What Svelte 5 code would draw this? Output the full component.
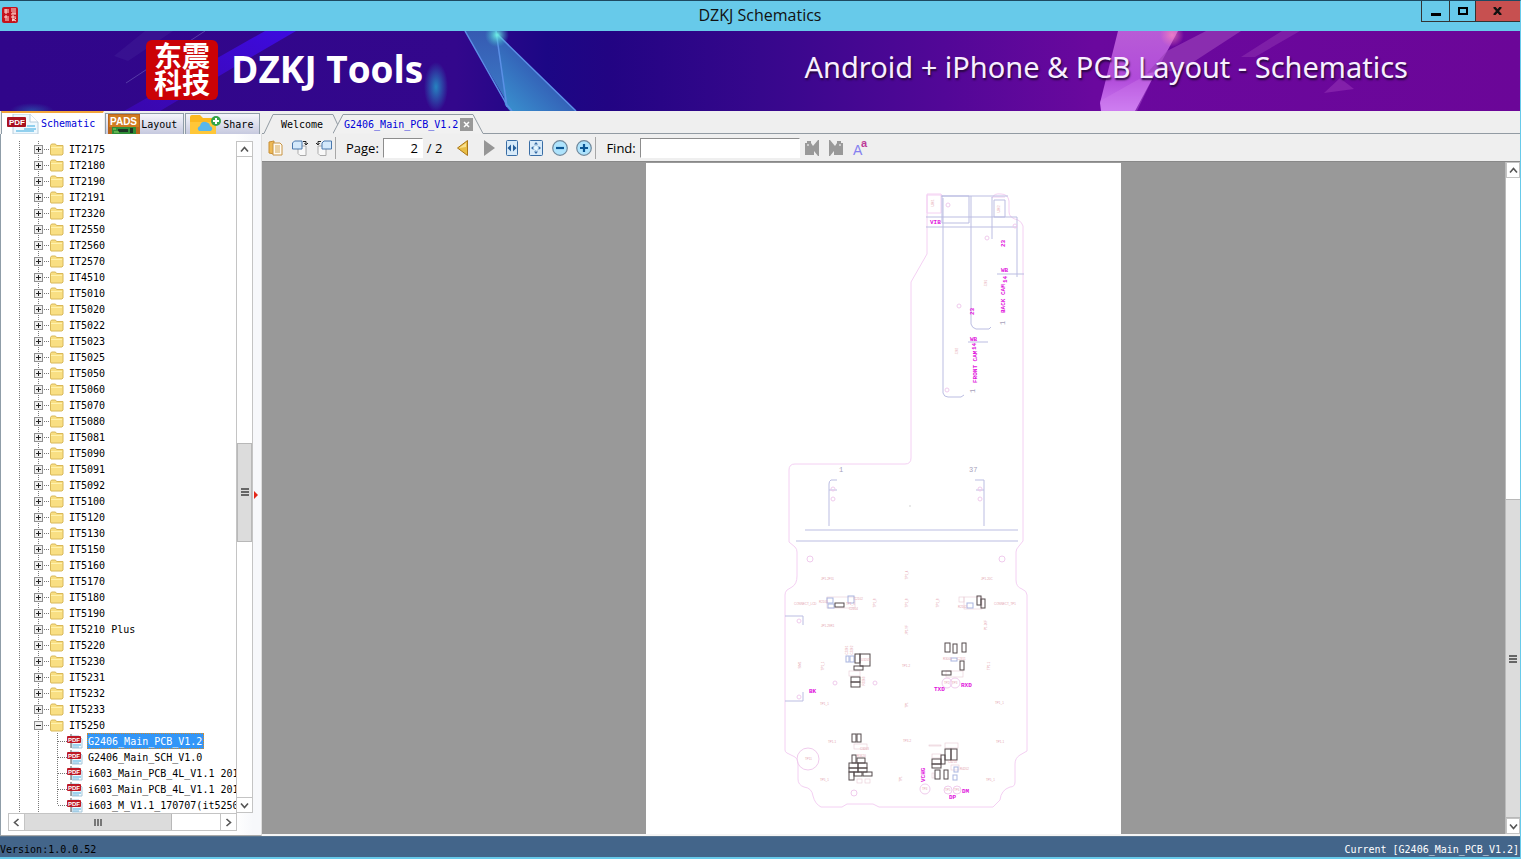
<script>
  const folders = [
    'IT2175', 'IT2180', 'IT2190', 'IT2191', 'IT2320', 'IT2550', 'IT2560', 'IT2570',
    'IT4510', 'IT5010', 'IT5020', 'IT5022', 'IT5023', 'IT5025', 'IT5050', 'IT5060',
    'IT5070', 'IT5080', 'IT5081', 'IT5090', 'IT5091', 'IT5092', 'IT5100', 'IT5120',
    'IT5130', 'IT5150', 'IT5160', 'IT5170', 'IT5180', 'IT5190', 'IT5210 Plus',
    'IT5220', 'IT5230', 'IT5231', 'IT5232', 'IT5233', 'IT5250'
  ]
  const files = [
    'G2406_Main_PCB_V1.2',
    'G2406_Main_SCH_V1.0',
    'i603_Main_PCB_4L_V1.1 20170707',
    'i603_Main_PCB_4L_V1.1 20170710',
    'i603_M_V1.1_170707(it5250)'
  ]

  let open = $state('IT5250')
  let selected = $state(files[0])
  let page = $state('2')
  let query = $state('')

  // component outlines on the board: x, y, width, height
  const parts = [
    [835, 603, 9, 4], [977, 596, 4, 9], [981, 599, 4, 9],
    [855, 654, 5, 9], [860, 654, 10, 12], [854, 666, 9, 4], [851, 677, 9, 5], [851, 682, 9, 5],
    [945, 643, 5, 9], [953, 644, 4, 9], [962, 643, 4, 9], [960, 661, 4, 9], [942, 671, 9, 4],
    [852, 734, 4, 8], [857, 734, 4, 8],
    [852, 755, 4, 8], [857, 758, 8, 5], [849, 763, 9, 5], [858, 763, 9, 5], [849, 768, 9, 4],
    [858, 768, 9, 4], [849, 772, 5, 8], [854, 772, 8, 4], [863, 772, 9, 4],
    [945, 749, 6, 11], [951, 749, 6, 11], [941, 755, 4, 9], [932, 759, 9, 5], [932, 764, 9, 4],
    [935, 770, 5, 9], [944, 770, 4, 9]
  ]
  const blueParts = [
    [827, 598, 6, 5], [828, 604, 6, 4], [848, 596, 6, 7], [967, 603, 6, 5],
    [846, 656, 3, 6], [850, 656, 4, 6], [951, 658, 6, 3], [954, 767, 4, 5], [953, 775, 4, 5]
  ]
  const faintParts = [
    [827, 597, 28, 11], [959, 597, 5, 5], [964, 597, 18, 12], [849, 671, 11, 5],
    [946, 671, 17, 6], [854, 744, 13, 5], [929, 745, 12, 1], [945, 743, 13, 5], [932, 754, 9, 4],
    [857, 779, 5, 4], [865, 779, 5, 4], [932, 773, 2, 5], [951, 765, 8, 5]
  ]
  const holes = [
    [810, 559, 3], [1002, 559, 3], [833, 489, 2], [833, 499, 2], [980, 489, 2], [980, 499, 2],
    [799, 621, 2], [799, 697, 2], [835, 683, 2], [875, 683, 2], [854, 793, 3], [948, 205, 2],
    [987, 238, 2], [959, 306, 2], [947, 390, 2], [1015, 226, 2], [947, 683, 5], [955, 683, 5],
    [925, 789, 5], [948, 790, 4], [957, 790, 4], [808, 759, 11]
  ]
  const marks = [
    ['CONNECT_LCD', 794, 605], ['CONNECT_TP1', 994, 605], ['JP1-2F51', 821, 580],
    ['JP1-20C', 981, 580], ['JP1-29R1', 821, 627], ['TP1-2', 902, 667], ['TP1_1', 846, 605],
    ['C2102', 854, 600], ['R2101', 819, 603], ['C2104', 849, 610], ['R2102', 958, 608],
    ['TP1_1', 820, 705], ['TP1_1', 995, 704], ['TP1-1', 828, 743], ['TP1-1', 996, 743],
    ['TP3-2', 903, 742], ['TP5_1', 820, 781], ['TP5_1', 986, 781], ['C3203', 860, 750],
    ['TP11', 805, 760], ['U3205', 861, 661], ['R3001', 943, 660], ['C2311', 957, 660],
    ['R4202', 960, 770], ['C4210', 948, 763], ['R3420', 857, 757], ['TP2', 944, 684],
    ['TP3', 952, 684], ['TP4', 922, 790], ['TP5', 945, 791], ['TP6', 954, 791]
  ]
  const sideMarks = [
    ['TP1_8', 876, 603], ['TP1_8', 908, 603], ['TP1_8', 939, 603], ['TP1_4', 908, 575],
    ['P1-20F', 987, 625], ['JP1-9F', 908, 630], ['SIM1', 801, 665], ['TP1_1', 824, 666],
    ['TP1-1', 990, 666], ['TP1', 908, 705], ['TP1', 902, 779], ['C3201', 848, 650],
    ['C3202', 853, 650], ['R3203', 865, 681], ['U301', 934, 203], ['U302', 1000, 209],
    ['J201', 987, 283], ['J202', 958, 351]
  ]
</script>

{#snippet pdf()}
  <svg class="pdf" width="16" height="16" viewBox="0 0 16 16">
    <path d="M5 3h7l3 3v9H5z" fill="#f2f9fd" stroke="#a5c6da" />
    <path d="M6 11h8v2H6z" fill="#9cd3ef" />
    <path d="M6 14h6" stroke="#79b7dc" />
    <path d="M4 10V15M4 1v2" stroke="#555" />
    <rect x="0" y="3" width="14" height="7" rx="1" fill="#bd1825" />
    <text x="1" y="9" font-size="6" font-weight="bold" fill="#fff">PDF</text>
  </svg>
{/snippet}

{#snippet chevron(d)}
  <svg width="15" height="15" viewBox="0 0 15 15"><path {d} fill="none" stroke="#555" stroke-width="1.6" /></svg>
{/snippet}

<div class="window">
  <header class="titlebar">
    <svg class="app-icon" width="16" height="16" viewBox="0 0 16 16">
      <rect width="16" height="16" rx="2" fill="#c5131d" />
      <path d="M2 3h5M4 2v5M2 5h5M2 10h5M4 8v6M6 11v3M9 2h5M9 4h5M10 6h4M9 7h5M9 10h5M11 8v6M10 12l4 2M14 11l-4 3" stroke="#ffe4dd" fill="none" />
    </svg>
    <h1>DZKJ Schematics</h1>
    <div class="winbtns">
      <button class="min" aria-label="Minimize"><span></span></button>
      <button class="max" aria-label="Maximize"><span></span></button>
      <button class="close" aria-label="Close">
        <svg width="10" height="8" viewBox="0 0 10 8"><path d="M1 0l7 8M8 0L1 8" stroke="#111" stroke-width="2.4" /></svg>
      </button>
    </div>
  </header>

  <div class="banner">
    <svg class="art" viewBox="0 0 1520 80" preserveAspectRatio="xMidYMid slice">
      <defs>
        <linearGradient id="base">
          <stop offset="0" stop-color="#30068a" />
          <stop offset=".3" stop-color="#33078c" />
          <stop offset=".36" stop-color="#1c0785" />
          <stop offset=".4" stop-color="#220483" />
          <stop offset=".5" stop-color="#36078c" />
          <stop offset=".62" stop-color="#520797" />
          <stop offset=".72" stop-color="#6a089e" />
          <stop offset="1" stop-color="#6b0698" />
        </linearGradient>
        <linearGradient id="beam" x1="1" y1="0" x2="0" y2="1">
          <stop offset="0" stop-color="#3d0be0" />
          <stop offset="1" stop-color="#4208cf" stop-opacity=".5" />
        </linearGradient>
        <linearGradient id="shard" x1="0" y1="0" x2="0" y2="1">
          <stop offset="0" stop-color="#365ab2" />
          <stop offset="1" stop-color="#3c7fc9" />
        </linearGradient>
        <linearGradient id="wing" x1="0" y1="1" x2="1" y2="0">
          <stop offset="0" stop-color="#3a98d2" />
          <stop offset="1" stop-color="#2e2d9e" />
        </linearGradient>
        <linearGradient id="pink" x1="0" y1="0" x2="0" y2="1">
          <stop offset="0" stop-color="#b85cd6" />
          <stop offset=".6" stop-color="#b14bda" />
          <stop offset="1" stop-color="#cc7bf2" />
        </linearGradient>
        <radialGradient id="glow">
          <stop offset="0" stop-color="#2683c0" />
          <stop offset="1" stop-color="#2683c0" stop-opacity="0" />
        </radialGradient>
        <radialGradient id="spark">
          <stop offset="0" stop-color="#6ff0e4" />
          <stop offset="1" stop-color="#3fb8d0" stop-opacity="0" />
        </radialGradient>
        <radialGradient id="rose">
          <stop offset="0" stop-color="#ff8cc0" stop-opacity=".7" />
          <stop offset="1" stop-color="#ff7cb4" stop-opacity="0" />
        </radialGradient>
      </defs>
      <rect width="1520" height="80" fill="url(#base)" />
      <path d="M265 0h31L236 35l-76 45h-36z" fill="url(#beam)" />
      <path d="M145 0h28l-45 30-14-5z" fill="#4a2ba0" opacity=".3" />
      <path d="M205 0L126 52" stroke="#6853b5" opacity=".7" />
      <ellipse cx="436" cy="56" rx="12" ry="25" fill="url(#glow)" />
      <ellipse cx="32" cy="80" rx="22" ry="8" fill="url(#glow)" opacity=".5" />
      <path d="M465 0h32l10 75 5 5z" fill="url(#shard)" />
      <path d="M497 3l79 77h-66l-5-6z" fill="url(#wing)" />
      <path d="M465 0l42 74 5 6M496 0l11 76M497 3l79 77" fill="none" stroke="#5b8fe6" stroke-width="1.5" />
      <circle cx="497" cy="4" r="12" fill="url(#spark)" />
      <path d="M1118 0h60l-43 80h-34l-1-8z" fill="url(#pink)" />
      <path d="M1100 70l57-32-20 42h-35z" fill="#d386ef" opacity=".3" />
      <path d="M1206 0h35l-60 39-34 3 20-22z" fill="#9b42ba" opacity=".65" />
      <path d="M1282 0h18l-45 26h-14z" fill="#8b2eaf" opacity=".6" />
      <path d="M1324 62l16-15 14 11z" fill="#8d2bb0" opacity=".7" />
      <circle cx="1172" cy="4" r="12" fill="url(#rose)" />
    </svg>
    <div class="seal">东震<br />科技</div>
    <strong class="brand">DZKJ Tools</strong>
    <span class="slogan">Android + iPhone &amp; PCB Layout - Schematics</span>
  </div>

  <div class="body">
    <aside>
      <nav class="side-tabs">
        <button class="side-tab active">
          <svg width="34" height="20" viewBox="0 0 34 20">
            <path d="M6 0h17l8 8v12H6z" fill="#eef8fe" stroke="#b8cddc" />
            <path d="M23 0v8h8" fill="#fff" stroke="#b8cddc" />
            <path d="M20 12h8M9 17h18M17 15h12" stroke="#92d0ee" stroke-width="2" />
            <rect x="0" y="3" width="19" height="10" rx="1" fill="#a91020" />
            <text x="2" y="11" font-size="8" font-weight="bold" fill="#fff">PDF</text>
          </svg>
          Schematic
        </button>
        <button class="side-tab">
          <svg width="32" height="20" viewBox="0 0 32 20">
            <rect width="32" height="20" fill="#b9641c" />
            <rect x="1" y="1" width="30" height="12" fill="#d07b20" />
            <text x="2" y="11" font-size="10" font-weight="bold" fill="#fff">PADS</text>
            <path d="M4 13h24v7H4z" fill="#2f8d37" />
            <path d="M10 15h10v3H10zM22 14h3v5h-3z" fill="#1c3524" />
            <path d="M5 15h3M6 18h5" stroke="#8fda65" />
          </svg>
          Layout
        </button>
        <button class="side-tab">
          <svg width="32" height="20" viewBox="0 0 32 20">
            <path d="M0 3q0-2 2-2h8l3 3h10q3 0 3 3v13H0z" fill="#fbb81f" />
            <path d="M0 8h26v12H0z" fill="#ffc738" />
            <path d="M9 17q-3-3 1-5 1-5 6-4 4 1 4 4 4 2 1 5z" fill="#57b7ec" />
            <circle cx="26" cy="7" r="5" fill="#34a449" />
            <path d="M26 4v6M23 7h6" stroke="#fff" stroke-width="2" />
          </svg>
          Share
        </button>
      </nav>

      <div class="tree-area">
        <div class="tree-row">
          <ul class="tree">
            {#each folders as name}
              <li>
                <div class="node">
                  <svg class="guides" width="48" height="16" viewBox="0 0 48 16">
                    <path d="M17.500 0V16M36.500 0V16M42 8.500H48" stroke="#777" stroke-dasharray="1 1" />
                  </svg>
                  <button class="toggle" aria-label="Toggle {name}" onclick={() => open = open === name ? '' : name}>
                    <svg width="9" height="9" viewBox="0 0 9 9">
                      <rect x=".5" y=".5" width="8" height="8" fill="#f0f0f0" stroke="#919191" />
                      <path d={open === name ? 'M2 4.500H7' : 'M2 4.500H7M4.500 2V7'} stroke="#222" />
                    </svg>
                  </button>
                  <svg class="folder" width="14" height="13" viewBox="0 0 14 13">
                    <path d="M.5 2.500L1.500 1h4l1 1.500H13V11L12 12H1L.5 11z" fill="#f9df83" stroke="#d8b85a" />
                    <path d="M1 4h11v1H1z" fill="#fff2ae" />
                  </svg>
                  <span class="label">{name}</span>
                </div>
                {#if open === name}
                  <ul>
                    {#each files as file, i}
                      <li class="node file">
                        <svg class="guides" width="66" height="16" viewBox="0 0 66 16">
                          <path d="M17.500 0V16M36.500 0V16M55.500 0V{i === files.length - 1 ? 8 : 16}M56 8.500H66" stroke="#777" stroke-dasharray="1 1" />
                        </svg>
                        {@render pdf()}
                        <button class="label" class:selected={selected === file} onclick={() => selected = file}>{file}</button>
                      </li>
                    {/each}
                  </ul>
                {/if}
              </li>
            {/each}
          </ul>
          <div class="vbar side-bar">
            <button aria-label="Scroll up">{@render chevron('M4 9.500l3.500-4 3.500 4')}</button>
            <div class="track">
              <div class="space-top"></div>
              <div class="thumb"><i></i><i></i><i></i></div>
              <div class="space-bottom"></div>
            </div>
            <button aria-label="Scroll down">{@render chevron('M4 5.500l3.500 4 3.500-4')}</button>
          </div>
        </div>
        <div class="hbar">
          <button aria-label="Scroll left">{@render chevron('M9.500 4l-4 3.500 4 3.500')}</button>
          <div class="htrack"><div class="hthumb"><i></i><i></i><i></i></div></div>
          <button class="right" aria-label="Scroll right">{@render chevron('M5.500 4l4 3.500-4 3.500')}</button>
        </div>
      </div>
      <svg class="splitter" width="4" height="8" viewBox="0 0 4 8"><path d="M0 0l4 4-4 4z" fill="#e32719" /></svg>
    </aside>

    <main>
      <nav class="doc-tabs">
        <button class="doc-tab welcome">
          <svg width="80" height="20" viewBox="0 0 80 20"><path d="M0 19.500h2l9-19h60l6 13" fill="none" stroke="#929ba3" /></svg>
          <span>Welcome</span>
        </button>
        <div class="doc-tab current">
          <svg width="152" height="20" viewBox="0 0 152 20"><path d="M0 19.500L10 .5h130l10 19" fill="#f1f1f1" stroke="#929ba3" /></svg>
          <button class="doc-name">G2406_Main_PCB_V1.2</button>
          <button class="tab-close" aria-label="Close tab">
            <svg width="7" height="7" viewBox="0 0 7 7"><path d="M1 1l5 5M6 1L1 6" stroke="#fff" stroke-width="1.5" /></svg>
          </button>
        </div>
        <div class="rest"></div>
      </nav>

      <div class="toolbar">
        <button aria-label="Open">
          <svg width="16" height="16" viewBox="0 0 16 16">
            <path d="M1 2l5-1v13l-5-1z" fill="#eeb954" stroke="#c88f36" />
            <path d="M5 3h7l2 2v10H5z" fill="#fffaf0" stroke="#c79445" />
            <path d="M7 6h5M7 8h5M7 10h5M7 12h5" stroke="#d3a758" />
          </svg>
        </button>
        <button aria-label="Rotate right">
          <svg width="16" height="16" viewBox="0 0 16 16">
            <path d="M6 6h8v9.500H8l-2-2z" fill="#f8f8f8" stroke="#aaa" />
            <path d="M.5 3l2-2H10v8H.5z" fill="#d4e9fb" stroke="#4b78ad" />
            <path d="M11 1.500h3V4M12.500 3L14 5l2-2" fill="none" stroke="#222" />
          </svg>
        </button>
        <button aria-label="Rotate left">
          <svg width="16" height="16" viewBox="0 0 16 16">
            <path d="M2 6h8v9.500H4l-2-2z" fill="#f8f8f8" stroke="#aaa" />
            <path d="M6 3l2-2h7.500v8H6z" fill="#d4e9fb" stroke="#4b78ad" />
            <path d="M5 1.500H2V4M0 3l2 2 1.500-2" fill="none" stroke="#222" />
          </svg>
        </button>
        <span class="sep"></span>
        <label for="page">Page:</label>
        <input id="page" class="page" bind:value={page} />
        <span class="total">/ 2</span>
        <button aria-label="Previous page">
          <svg width="16" height="16" viewBox="0 0 16 16"><path d="M2.500 8L12.500.5v15z" fill="#e8bd45" stroke="#aa7719" /><path d="M4 8l7-5v4z" fill="#f9e18f" /></svg>
        </button>
        <button class="next" aria-label="Next page">
          <svg width="16" height="16" viewBox="0 0 16 16"><path d="M3 0l11 8-11 8z" fill="#969696" /></svg>
        </button>
        <button aria-label="Fit width">
          <svg width="16" height="16" viewBox="0 0 16 16">
            <rect x="2.500" y=".5" width="11" height="15" rx="1" fill="#d7eaf9" stroke="#396da5" />
            <path d="M7 4.500v7L3.500 8zM9 4.500v7L12.500 8z" fill="#255e9a" />
          </svg>
        </button>
        <button aria-label="Fit page">
          <svg width="16" height="16" viewBox="0 0 16 16">
            <rect x="1.500" y=".5" width="13" height="15" rx="1" fill="#d7eaf9" stroke="#396da5" />
            <path d="M8 2l2 2.500H6zM8 14l2-2.500H6zM3 8l2.500-2v4zM13 8l-2.500-2v4z" fill="#356ba6" />
            <circle cx="8" cy="8" r="2.500" fill="#e5f6ff" stroke="#82acd0" stroke-dasharray="1 1" />
          </svg>
        </button>
        <button aria-label="Zoom out">
          <svg width="16" height="16" viewBox="0 0 16 16"><circle cx="8" cy="8" r="7.300" fill="#aee3fc" stroke="#71899c" stroke-width="1.200" /><path d="M4 8h8" stroke="#0b5795" stroke-width="2.200" /></svg>
        </button>
        <button aria-label="Zoom in">
          <svg width="16" height="16" viewBox="0 0 16 16"><circle cx="8" cy="8" r="7.300" fill="#aee3fc" stroke="#71899c" stroke-width="1.200" /><path d="M4 8h8M8 4v8" stroke="#0b5795" stroke-width="2.200" /></svg>
        </button>
        <span class="sep"></span>
        <label for="find">Find:</label>
        <input id="find" class="find" bind:value={query} />
        <button aria-label="Find previous">
          <svg width="16" height="16" viewBox="0 0 16 16"><path d="M1 3h2V1h4v2l2 3 5-6h1v16h-1l-4-5v4H1z" fill="#999" /><circle cx="4" cy="5" r="1" fill="#ddd" /></svg>
        </button>
        <button aria-label="Find next">
          <svg width="16" height="16" viewBox="0 0 16 16"><path d="M15 3h-2V1H9v2L7 6 2 0H1v16h1l4-5v4h9z" fill="#999" /><circle cx="12" cy="5" r="1" fill="#ddd" /></svg>
        </button>
        <button aria-label="Match case">
          <svg width="16" height="16" viewBox="0 0 16 16">
            <text x="1" y="15" font-size="14" fill="#8580ef">A</text>
            <text x="9" y="7" font-size="11" font-weight="bold" fill="#bd3b99">a</text>
          </svg>
        </button>
      </div>

      <div class="viewer">
        <div class="canvas">
          <svg class="sheet" viewBox="646 163 475 671">
            <rect x="646" y="163" width="475" height="671" fill="#fff" />
            <g fill="none" stroke="#f4d0f3">
              <path d="M943 197l-2-3H927V254L911 282V458Q911 464 905 464H795Q789 464 789 470V542L795 547Q797 549 797 552V576Q797 584 792 587L787 590Q785 592 785 595V750Q785 752 787 753L795 757Q798 759 798 763V779Q798 785 804 787 812 788 813 796 815 804 821 807H842L847 804H873L879 807H993L1000 800Q1001 790 1010 787 1015 787 1015 782V764Q1015 758 1020 755L1027 751V595Q1027 591 1022 589 1016 587 1016 580V552Q1016 549 1019 546L1023 541V226Q1022 222 1018 220 1009 218 1009 212V201Q1008 194 1001 194 994 193 992 198" />
              <path d="M927 195h14v18h-14zM993 197h12" />
            </g>
            <g fill="none" stroke="#bbbde2">
              <path d="M942 196h27v27h-27zM992 197v42M994 200h11v17h-11z" />
              <path d="M943 198v195q1 4 5 4h13l3-2M971 196v128q1 4 5 5h13l2-2" />
              <path d="M926 217h91M926 227h91M1017 217v60M997 274h27M968 342h20M941 196h67" />
              <path d="M837 480h-6q-2 1-2 4v42M829 490h8M975 480h9v46M976 490h8" />
              <path d="M805 530h213M796 541h222M785 616h18v9M785 701h18v-9" />
            </g>
            <g fill="none" stroke="#f0cbed">
              {#each holes as [cx, cy, r]}
                <circle {cx} {cy} {r} />
              {/each}
            </g>
            <g fill="none" stroke="#e8c9d3" stroke-width=".6">
              {#each faintParts as [x, y, width, height]}
                <rect {x} {y} {width} {height} />
              {/each}
            </g>
            <g fill="none" stroke="#a9b5e0">
              {#each blueParts as [x, y, width, height]}
                <rect {x} {y} {width} {height} />
              {/each}
            </g>
            <g fill="none" stroke="#554b4d">
              {#each parts as [x, y, width, height]}
                <rect {x} {y} {width} {height} />
              {/each}
            </g>
            <g class="marks">
              {#each marks as [name, x, y]}
                <text {x} {y}>{name}</text>
              {/each}
              {#each sideMarks as [name, x, y]}
                <text text-anchor="middle" transform="translate({x} {y}) rotate(-90)">{name}</text>
              {/each}
            </g>
            <g class="net">
              <text x="930" y="224">VIB</text>
              <text x="1001" y="272">WB</text>
              <text x="970" y="341">WB</text>
              <text x="934" y="691">TXD</text>
              <text x="961" y="687">RXD</text>
              <text x="949" y="799">DP</text>
              <text x="962" y="793">DM</text>
              <text x="809" y="693">BK</text>
              <text transform="translate(1005 247) rotate(-90)">23</text>
              <text transform="translate(974 315) rotate(-90)">23</text>
              <text transform="translate(1007 283) rotate(-90)">14</text>
              <text transform="translate(976 350) rotate(-90)">14</text>
              <text transform="translate(1005 313) rotate(-90)">BACK CAM</text>
              <text transform="translate(977 383) rotate(-90)">FRONT CAM</text>
              <text transform="translate(925 782) rotate(-90)">VCHG</text>
            </g>
            <g class="pins">
              <text x="839" y="472">1</text>
              <text x="969" y="472">37</text>
              <text transform="translate(1005 325) rotate(-90)">1</text>
              <text transform="translate(975 393) rotate(-90)">1</text>
            </g>
            <circle cx="910" cy="506" r=".8" fill="#ccc" />
          </svg>
        </div>
        <div class="vbar doc-bar">
          <button aria-label="Page up">{@render chevron('M4 9.500l3.500-4 3.500 4')}</button>
          <div class="track">
            <div class="space-top"></div>
            <div class="thumb"><i></i><i></i><i></i></div>
          </div>
          <button aria-label="Page down">{@render chevron('M4 5.500l3.500 4 3.500-4')}</button>
        </div>
      </div>
    </main>
  </div>

  <footer>
    <span>Version:1.0.0.52</span>
    <span class="where">Current [{selected}]</span>
  </footer>
</div>

<style>
  :global(body) {
    margin: 0;
    background: #efefef;
  }

  .window {
    box-sizing: border-box;
    height: 100vh;
    display: flex;
    flex-direction: column;
    border-top: 1px solid #1d4961;
    border-right: 1px solid #67caea;
    border-bottom: 2px solid #67caea;
    background: #efefef;
    font-family: 'DejaVu Sans Mono', 'Liberation Mono', monospace;
    font-size: 10px;
    color: #000;
    overflow: hidden;
  }

  button {
    padding: 0;
    border: 0;
    background: none;
    font: inherit;
    color: inherit;
  }

  ul {
    list-style: none;
    margin: 0;
    padding: 0;
  }

  svg {
    display: block;
    flex: none;
  }

  svg text {
    font-family: 'Liberation Sans', sans-serif;
  }

  .titlebar {
    display: grid;
    grid-template-columns: 1fr auto 1fr;
    height: 30px;
    flex: none;
    background: #67caea;
  }

  .app-icon {
    margin: 6px 2px;
  }

  h1 {
    margin: 0;
    font: 16px/29px 'Open Sans', sans-serif;
    color: #111;
  }

  .winbtns {
    display: flex;
    justify-self: end;
    height: 20px;
    border: solid #333;
    border-width: 0 0 1px 1px;
  }

  .winbtns button {
    display: flex;
    align-items: center;
    justify-content: center;
  }

  .min {
    width: 27px;
  }

  .min span {
    width: 10px;
    height: 3px;
    margin-top: 6px;
    background: #000;
  }

  .winbtns .max {
    width: 27px;
    border-left: 1px solid #333;
    border-right: 1px solid #333;
  }

  .max span {
    width: 6px;
    height: 4px;
    border: 2px solid #000;
  }

  .close {
    width: 44px;
    background: #c75050;
  }

  .banner {
    position: relative;
    display: flex;
    align-items: center;
    height: 80px;
    flex: none;
    padding: 0 112px 0 146px;
    color: #fff;
    overflow: hidden;
  }

  .art {
    position: absolute;
    inset: 0;
    width: 100%;
    height: 100%;
  }

  .seal {
    position: relative;
    box-sizing: border-box;
    width: 72px;
    height: 60px;
    margin-bottom: 2px;
    padding-top: 2px;
    border-radius: 6px;
    background: #cb0206;
    font: bold 28px/27px 'Noto Sans CJK SC', sans-serif;
    text-align: center;
  }

  .brand {
    position: relative;
    margin: 0 auto 4px 13px;
    font: bold 37px/48px 'Open Sans', sans-serif;
  }

  .slogan {
    position: relative;
    margin-bottom: 8px;
    font: 29px/40px 'Noto Sans', sans-serif;
    color: #f8efff;
    text-shadow: 1px 2px 2px #26083c;
    white-space: nowrap;
  }

  .body {
    flex: 1;
    display: flex;
    min-height: 0;
  }

  aside {
    position: relative;
    display: flex;
    flex-direction: column;
    width: 262px;
    flex: none;
  }

  .side-tabs {
    display: flex;
    align-items: flex-end;
    gap: 1px;
    height: 23px;
    flex: none;
    padding-left: 1px;
  }

  .side-tab {
    box-sizing: border-box;
    display: flex;
    align-items: center;
    gap: 1px;
    height: 21px;
    padding: 0 6px 0 2px;
    border: 1px solid #8f9da8;
    border-bottom: 0;
    background: linear-gradient(#f5f6fb, #c6c9df);
  }

  .side-tab:last-child {
    padding-left: 4px;
  }

  .side-tab.active {
    height: 23px;
    padding: 0 8px 0 5px;
    gap: 0;
    border-color: #fff;
    border-top: 2px solid #f2a43a;
    border-left-color: #8f9da8;
    background: #fff;
    color: #0000d8;
  }

  .tree-area {
    flex: 1;
    display: flex;
    flex-direction: column;
    min-height: 0;
    padding: 7px 8px 4px 1px;
    border-left: 1px solid #8f9da8;
    border-right: 1px solid #ddd;
    border-bottom: 1px solid #aaa;
    background: linear-gradient(90deg, #fff 234px, #f7f8fb 252px);
  }

  .tree-row {
    flex: 1;
    display: flex;
    min-height: 0;
  }

  .tree {
    flex: 1;
    min-width: 0;
    overflow: hidden;
  }

  .node {
    position: relative;
    display: flex;
    align-items: center;
    height: 16px;
    padding-left: 32px;
    white-space: nowrap;
  }

  .guides {
    position: absolute;
    left: 0;
    top: 0;
  }

  .toggle {
    position: relative;
  }

  .folder {
    margin: 0 5px 0 7px;
    position: relative;
  }

  .file {
    padding-left: 65px;
  }

  .pdf {
    position: relative;
    margin-right: 4px;
  }

  .file .label {
    height: 16px;
    padding: 0 1px 0 0;
    border: 1px solid transparent;
  }

  .file .selected {
    border: 1px dotted #d78b22;
    background: #3296f8;
    color: #fff;
  }

  .vbar {
    box-sizing: border-box;
    display: flex;
    flex-direction: column;
    flex: none;
  }

  .vbar button {
    display: flex;
    justify-content: center;
    align-items: center;
    height: 16px;
    border: 1px solid #c4c4c4;
    background: #fff;
  }

  .track {
    flex: 1;
    display: flex;
    flex-direction: column;
    background: #fff;
  }

  .thumb {
    display: flex;
    flex-direction: column;
    align-items: center;
    justify-content: center;
    gap: 1px;
    border: 1px solid #b8b8b8;
    background: #dcdcdc;
  }

  .thumb i {
    width: 8px;
    height: 2px;
    background: #666;
  }

  .side-bar {
    width: 17px;
    border: solid #c4c4c4;
    border-width: 0 1px;
  }

  .side-bar button {
    border-width: 1px 0;
  }

  .side-bar .space-top {
    flex: 286;
  }

  .side-bar .thumb {
    flex: 98;
  }

  .side-bar .space-bottom {
    flex: 255;
  }

  .hbar {
    display: flex;
    height: 16px;
    flex: none;
    margin: 0 16px 0 6px;
    border: 1px solid #c4c4c4;
  }

  .hbar button {
    display: flex;
    align-items: center;
    border-right: 1px solid #c4c4c4;
    background: #fff;
  }

  .hbar .right {
    border-right: 0;
    border-left: 1px solid #c4c4c4;
  }

  .htrack {
    flex: 1;
    background: #fff;
  }

  .hthumb {
    display: flex;
    align-items: center;
    justify-content: center;
    gap: 1px;
    width: 75%;
    height: 100%;
    border-right: 1px solid #b8b8b8;
    background: #dcdcdc;
  }

  .hthumb i {
    width: 2px;
    height: 7px;
    background: #777;
  }

  .splitter {
    position: absolute;
    right: 4px;
    top: 380px;
  }

  main {
    flex: 1;
    display: flex;
    flex-direction: column;
    min-width: 0;
  }

  .doc-tabs {
    display: flex;
    align-items: flex-end;
    height: 23px;
    flex: none;
  }

  .doc-tab {
    position: relative;
    display: flex;
    align-items: center;
    height: 20px;
  }

  .doc-tab > svg {
    position: absolute;
    left: 0;
    top: 0;
  }

  .doc-tab span,
  .doc-name,
  .tab-close {
    position: relative;
  }

  .welcome {
    width: 71px;
    padding-left: 19px;
  }

  .current {
    box-sizing: border-box;
    width: 150px;
    gap: 2px;
    padding-left: 11px;
    color: #0000d8;
  }

  .tab-close {
    display: flex;
    align-items: center;
    justify-content: center;
    width: 13px;
    height: 13px;
    background: #999;
  }

  .rest {
    flex: 1;
    height: 19px;
    border-bottom: 1px solid #929ba3;
  }

  .toolbar {
    box-sizing: border-box;
    display: flex;
    align-items: center;
    gap: 8px;
    height: 28px;
    flex: none;
    padding-left: 6px;
    border-bottom: 1px solid #888;
    font: 13px/20px 'Open Sans', sans-serif;
  }

  .sep {
    width: 1px;
    height: 22px;
    margin: 0 2px 0 -5px;
    background: #a7a7a7;
  }

  .toolbar label {
    margin-right: -4px;
  }

  .toolbar input {
    box-sizing: border-box;
    height: 20px;
    padding: 0 4px;
    border: 1px solid;
    border-color: #8d8d8d #fff #fff #8d8d8d;
    background: #fff;
    font: inherit;
    outline: none;
  }

  .page {
    width: 40px;
    margin-right: -4px;
    text-align: right;
  }

  .total {
    margin-right: 5px;
  }

  .next {
    margin-left: 2px;
    margin-right: -1px;
  }

  .find {
    width: 160px;
    margin-right: -4px;
  }

  .viewer {
    flex: 1;
    display: flex;
    min-height: 0;
    border-bottom: 2px solid #f5f5f5;
    background: #999;
  }

  .canvas {
    flex: 1;
    min-width: 0;
    padding-top: 1px;
    display: flex;
    justify-content: center;
  }

  .sheet {
    height: 100%;
  }

  .marks {
    fill: #e5a5af;
  }

  .marks text {
    font-size: 3px;
  }

  .net {
    fill: #e010dc;
  }

  .net text {
    font: bold 6px 'Liberation Mono', monospace;
  }

  .pins {
    fill: #a8a2bb;
  }

  .pins text {
    font: 7px 'Liberation Mono', monospace;
  }

  .doc-bar {
    width: 15px;
    border-left: 1px solid #bbb;
  }

  .doc-bar .space-top {
    flex: 322;
  }

  .doc-bar .thumb {
    flex: 318;
    border-width: 1px 0;
  }

  footer {
    display: flex;
    justify-content: space-between;
    align-items: flex-end;
    box-sizing: border-box;
    height: 21px;
    flex: none;
    padding: 0 1px 2px 0;
    border-top: 1px solid #58748f;
    background: #43658a;
  }

  .where {
    color: #fff;
  }
</style>
